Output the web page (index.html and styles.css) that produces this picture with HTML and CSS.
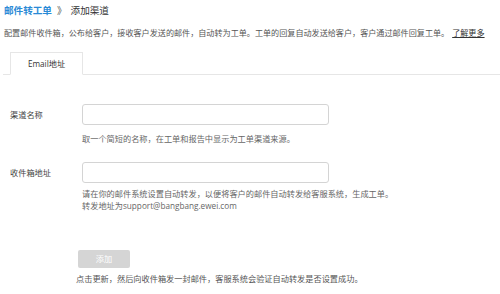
FILE: index.html
```html
<!DOCTYPE html>
<html lang="zh-CN">
<head>
	<meta charset="utf-8" />
	<title>添加渠道</title>
	<link rel="stylesheet" href="styles.css">
</head>
<body>
	<div class="header">
		<h1 class="title"><a href="#" class="crumb">邮件转工单</a><span class="sep">》</span>添加渠道</h1>
		<p class="desc">配置邮件收件箱，公布给客户，接收客户发送的邮件，自动转为工单。工单的回复自动发送给客户，客户通过邮件回复工单。<a href="#" class="more">了解更多</a></p>
	</div>
	<div class="tabs">
		<span class="tab">Email地址</span>
	</div>
	<form class="form">
		<div class="field">
			<label class="label">渠道名称</label>
			<input type="text" class="input">
		</div>
		<p class="hint hint-name">取一个简短的名称，在工单和报告中显示为工单渠道来源。</p>
		<div class="field">
			<label class="label">收件箱地址</label>
			<input type="text" class="input">
		</div>
		<p class="hint hint-mail">请在你的邮件系统设置自动转发，以便将客户的邮件自动转发给客服系统，生成工单。<br>转发地址为support@bangbang.ewei.com</p>
		<div class="actions">
			<button type="button" class="btn">添加</button>
			<p class="note">点击更新，然后向收件箱发一封邮件，客服系统会验证自动转发是否设置成功。</p>
		</div>
	</form>
</body>
</html>
```
FILE: styles.css
```css
html, body {
	margin: 0;
	background: #fff;
}
body {
	font-family: "Open Sans", "Noto Sans CJK SC", sans-serif;
	font-size: 8.2px;
	line-height: 12px;
	color: #444;
}
p {
	margin: 0;
}
.header {
	padding: 4px 5px 0 4px;
}
.title {
	margin: 0;
	font-size: 9.6px;
	line-height: 14px;
	font-weight: normal;
	color: #333;
}
.crumb {
	color: #2a8ad6;
	font-weight: 600;
	text-decoration: none;
}
.sep {
	margin: 0 4px 0 5px;
	color: #555;
}
.desc {
	margin-top: 9px;
	font-size: 8.1px;
	color: #555;
	white-space: nowrap;
}
.more {
	margin-left: 3px;
	color: #333;
	text-decoration: underline;
}
.tabs {
	display: flex;
	margin: 13px 0 0 3px;
	border-bottom: 1px solid #e6e6e6;
}
.tab {
	margin: 0 0 -1px 7px;
	width: 71px;
	height: 21px;
	line-height: 21px;
	text-align: center;
	color: #333;
	background: #fff;
	border: 1px solid #e6e6e6;
	border-bottom-color: #fff;
}
.form {
	padding: 29px 0 0 10px;
}
.field {
	display: flex;
	align-items: center;
}
.label {
	width: 72px;
	color: #444;
}
.input {
	box-sizing: border-box;
	margin: 0;
	width: 247px;
	height: 21px;
	border: 1px solid #d4d4d4;
	border-radius: 3px;
	background: #fff;
}
.hint {
	margin-left: 72px;
	color: #666;
}
.hint-name {
	margin-top: 8px;
	margin-bottom: 17px;
}
.hint-mail {
	margin-top: 5px;
}
.actions {
	margin: 38px 0 0 68px;
}
.btn {
	display: block;
	width: 52px;
	height: 18px;
	padding: 0;
	border: none;
	border-radius: 2px;
	background: #d5d5d5;
	color: #fff;
	font: inherit;
	line-height: 18px;
}
.note {
	margin: 5px 0 0 -2px;
	color: #555;
}
```
